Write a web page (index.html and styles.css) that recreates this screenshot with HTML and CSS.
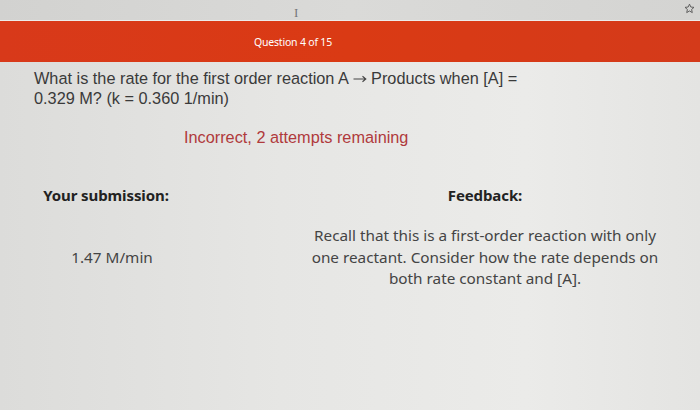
FILE: index.html
```html
<!DOCTYPE html>
<html>
<head>
<meta charset="utf-8">
<link rel="stylesheet" href="styles.css">
</head>
<body>
<div class="screen">
  <div class="topbar">
    <span class="cursor">I</span>
    <svg class="star" width="11" height="11" viewBox="0 0 24 24"><path d="M12 2.5l2.9 6.3 6.9.7-5.2 4.6 1.5 6.8L12 17.4l-6.1 3.5 1.5-6.8-5.2-4.6 6.9-.7z" fill="none" stroke="#555" stroke-width="2" stroke-linejoin="round"/></svg>
  </div>
  <div class="redbar"><span class="qnum">Question 4 of 15</span></div>
  <div class="content">
    <p class="question">What is the rate for the first order reaction A <svg class="arrow" width="14" height="8" viewBox="0 0 14 8"><path d="M0.5 4H12.5M9.5 1.3L12.8 4L9.5 6.7" fill="none" stroke="#444" stroke-width="1.1"/></svg> Products when [A] =<br>0.329 M? (k = 0.360 1/min)</p>
    <p class="status">Incorrect, 2 attempts remaining</p>
    <div class="grid">
      <div class="col col-left">
        <div class="head">Your submission:</div>
        <div class="value">1.47 M/min</div>
      </div>
      <div class="col col-right">
        <div class="head">Feedback:</div>
        <div class="feedback">Recall that this is a first-order reaction with only one reactant. Consider how the rate depends on both rate constant and [A].</div>
      </div>
    </div>
  </div>
</div>
</body>
</html>
```
FILE: styles.css
```css
html, body { margin: 0; padding: 0; }
body { width: 700px; height: 410px; overflow: hidden; }
.screen {
  width: 700px; height: 410px;
  background: linear-gradient(90deg, #dcdcda 0%, #e6e6e4 40%, #ebebe9 75%, #e4e4e2 100%);
  display: flex; flex-direction: column;
}
.topbar {
  height: 20px;
  background: linear-gradient(90deg, #d2d2d0, #dadad8 50%, #d4d4d2);
  border-bottom: 1px solid #ececea;
  position: relative;
}
.cursor {
  position: absolute; left: 294px; top: 5px;
  font-family: "Liberation Serif", serif; font-size: 13px; color: #777;
}
.star { position: absolute; left: 684px; top: 3px; }
.redbar {
  height: 41px;
  background: linear-gradient(90deg, #d8391a, #da3a14 50%, #d43a1a);
  display: flex; align-items: center;
  padding-left: 254px;
}
.qnum {
  font-family: "Noto Sans", sans-serif; font-size: 10.5px; color: #fff;
  letter-spacing: -0.2px; margin-top: 1px;
}
.content { padding: 6px 0 0 34px; }
.question {
  margin: 0; font-family: "Liberation Sans", Arial, sans-serif;
  font-size: 16.3px; line-height: 20px; color: #3a3a3a;
}
.arrow { vertical-align: 1px; }
.status {
  margin: 19px 0 0 150px; font-family: "Liberation Sans", Arial, sans-serif;
  font-size: 16.3px; line-height: 20px; color: #b03a3c;
}
.grid { display: flex; margin-top: 38px; }
.col { display: flex; flex-direction: column; align-items: center; font-family: "Noto Sans", sans-serif; color: #444; }
.col-left { width: 150px; margin-left: -3px; }
.col-right { width: 350px; margin-left: 129px; }
.head { font-weight: bold; font-size: 15px; line-height: 20px; color: #222; letter-spacing: -0.1px; }
.value { font-size: 15.3px; line-height: 20px; margin-top: 42px; margin-left: 12px; }
.feedback {
  font-size: 15.3px; line-height: 21.5px; text-align: center; margin-top: 20px;
  width: 350px;
}
```
